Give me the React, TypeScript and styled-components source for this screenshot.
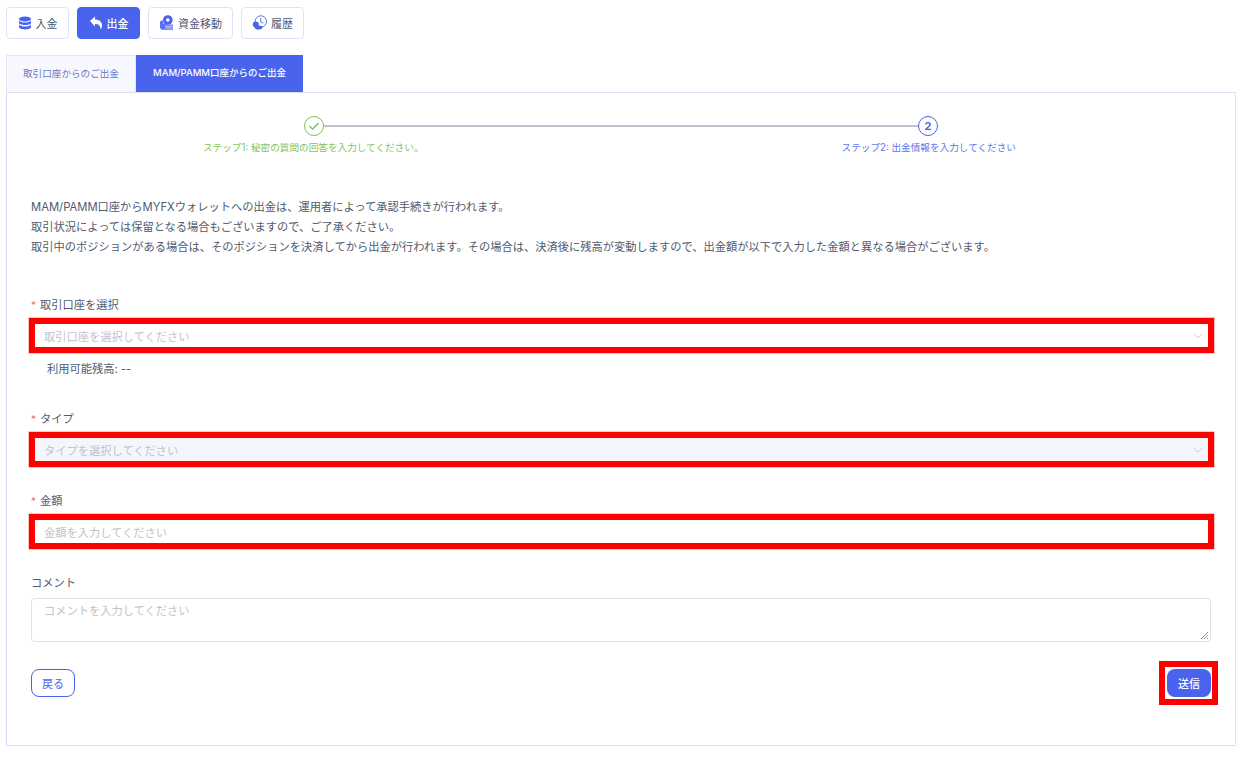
import React from "react";
import styled, { createGlobalStyle } from "styled-components";

const Global = createGlobalStyle`
    * { box-sizing: border-box; }
    body {
        margin: 0;
        background: #fff;
        font-family: Inter, "Noto Sans CJK JP", sans-serif;
        color: #515a6e;
    }
`;

const Page = styled.div`
    width: 1248px;
    height: 760px;
    padding: 7px 12px 0 6px;
    overflow: hidden;
`;

const Toolbar = styled.div`
    display: flex;
    gap: 8px;
`;

const NavButton = styled.button<{ $active?: boolean; $width: number }>`
    display: flex;
    align-items: center;
    justify-content: center;
    gap: 4px;
    width: ${(p) => p.$width}px;
    height: 32px;
    padding: 0 0 1px;
    border-radius: 4px;
    border: 1px solid ${(p) => (p.$active ? "#4a63ec" : "#e0e2f8")};
    background: ${(p) => (p.$active ? "#4a63ec" : "#fff")};
    color: ${(p) => (p.$active ? "#fff" : "#515a6e")};
    font: inherit;
    font-size: 11px;
    font-weight: ${(p) => (p.$active ? 500 : 400)};
`;

const Tabs = styled.div`
    display: flex;
    margin-top: 16px;
    height: 37px;
`;

const Tab = styled.div<{ $active?: boolean; $width: number }>`
    display: flex;
    align-items: center;
    justify-content: center;
    width: ${(p) => p.$width}px;
    padding-bottom: 3px;
    font-size: ${(p) => (p.$active ? 9.5 : 9.6)}px;
    color: ${(p) => (p.$active ? "#fff" : "#6a78c8")};
    font-weight: ${(p) => (p.$active ? 500 : 400)};
    background: ${(p) => (p.$active ? "#4a63ec" : "#f7f8fe")};
    border: ${(p) => (p.$active ? "none" : "1px solid #e6e8fa")};
    border-bottom: none;
`;

const Panel = styled.div`
    width: 1230px;
    height: 654px;
    border: 1px solid #dfe0f5;
    border-left-color: #d4d8fb;
    padding: 23px 24px 0;
`;

const Stepper = styled.div`
    height: 42px;
    width: 1180px;
`;

const StepTrack = styled.div`
    display: flex;
    align-items: center;
    margin-left: 273px;
    width: 634px;
    height: 20px;
`;

const Circle = styled.div<{ $done?: boolean }>`
    flex: none;
    display: flex;
    align-items: center;
    justify-content: center;
    width: 20px;
    height: 20px;
    border-radius: 50%;
    border: 1px solid ${(p) => (p.$done ? "#79c152" : "#4a63ec")};
    color: ${(p) => (p.$done ? "#79c152" : "#4a63ec")};
    font-size: 11px;
    font-weight: 700;
`;

const Line = styled.div`
    flex: 1;
    height: 2px;
    background: #c0c2d2;
`;

const StepLabels = styled.div`
    display: flex;
    justify-content: space-between;
    margin-top: 5px;
    padding: 0 195px 0 172px;
    font-size: 9.65px;
    line-height: 14px;
`;

const StepLabel = styled.span<{ $done?: boolean }>`
    color: ${(p) => (p.$done ? "#82c45e" : "#5d74ee")};
`;

const Notice = styled.div`
    margin-top: 39px;
    font-size: 11.25px;
    line-height: 20px;
    color: #515a6e;
`;

const Form = styled.div`
    margin-top: 40px;
    width: 1180px;
`;

const Label = styled.div`
    font-size: 11.25px;
    line-height: 16px;
    color: #515a6e;
    margin-bottom: 5px;
`;

const Required = styled.span`
    color: #f56c6c;
    margin-right: 4px;
    font-size: 10px;
`;

const Highlight = styled.div`
    width: 1185px;
    height: 35px;
    margin-left: -2px;
    border: 6px solid #ff0000;
    box-shadow: 0 0 0 0.5px #ff8080;
`;

const FieldBox = styled.div<{ $tinted?: boolean }>`
    display: flex;
    align-items: center;
    justify-content: space-between;
    height: 100%;
    padding: 1px 5px 0 9px;
    background: ${(p) => (p.$tinted ? "#f4f6fb" : "#fff")};
    font-size: 11.25px;
    color: #bfc3cc;
`;

const Balance = styled.div`
    margin: 8px 0 0 16px;
    font-size: 11.25px;
    line-height: 16px;
    color: #515a6e;
`;

const Section = styled.div<{ $top: number }>`
    margin-top: ${(p) => p.$top}px;
`;

const Comment = styled.div`
    position: relative;
    height: 44px;
    margin-top: 7px;
    padding: 5px 12px;
    border: 1px solid #dfe1e8;
    border-radius: 4px;
    font-size: 11.25px;
    line-height: 14px;
    color: #bfc3cc;
`;

const Grip = styled.svg`
    position: absolute;
    right: 1px;
    bottom: 1px;
`;

const Actions = styled.div`
    display: flex;
    justify-content: space-between;
    align-items: center;
    margin-top: 19px;
`;

const BackButton = styled.button`
    width: 44px;
    height: 28px;
    padding: 0;
    background: #fff;
    border: 1px solid #4a63ec;
    border-radius: 8px;
    color: #4a63ec;
    font: inherit;
    font-size: 11px;
`;

const SubmitFrame = styled.div`
    margin-right: -7px;
    padding: 2px 1px 2px 2px;
    border: 6px solid #ff0000;
`;

const SubmitButton = styled.button`
    display: block;
    width: 44px;
    height: 28px;
    padding: 0;
    background: #4a63ec;
    border: none;
    border-radius: 8px;
    color: #fff;
    font: inherit;
    font-size: 11px;
    font-weight: 500;
`;

const Chevron = () => (
    <svg width="10" height="6" viewBox="0 0 10 6" fill="none">
        <path d="M1 1l4 4 4-4" stroke="#c8ccd4" strokeWidth="1" />
    </svg>
);

const StackIcon = () => (
    <svg width="14" height="14" viewBox="0 0 14 14" fill="#4a63ec">
        <ellipse cx="7" cy="3" rx="6" ry="2.4" />
        <path d="M1 4.6c1 1.4 3.4 2 6 2s5-.6 6-2v2.2c0 1.3-2.7 2.3-6 2.3s-6-1-6-2.3z" />
        <path d="M1 8.6c1 1.4 3.4 2 6 2s5-.6 6-2v2.4c0 1.3-2.7 2.4-6 2.4s-6-1.100-6-2.400z" />
    </svg>
);

const ReplyIcon = () => (
    <svg width="14" height="14" viewBox="0 0 14 14" fill="#fff">
        <path d="M1 5l5-4.500v3c4 0 7 2 7 6 0 1.500-.5 3-1.500 4 .3-3.500-1.500-5.500-5.500-5.500v2.500z" />
    </svg>
);

const MoneyIcon = () => (
    <svg width="15" height="15" viewBox="0 0 15 15">
        <circle cx="8.800" cy="5" r="4.800" fill="#4a63ec" />
        <circle cx="8.800" cy="5" r="1.800" fill="#fff" />
        <path d="M1 6.500l3-1.500.5 3.800 5.500.7h4v5.200H3l-2-1.500z" fill="#5a70ee" />
        <path d="M6 11.200h8M6 13h8" stroke="#fff" strokeWidth=".7" />
    </svg>
);

const HistoryIcon = () => (
    <svg width="15" height="15" viewBox="0 0 15 15" fill="none">
        <circle cx="8.800" cy="6.500" r="5.700" stroke="#5a70ee" strokeWidth="1" fill="#fff" />
        <path d="M8.800 3.200v3.600l2.400 1.400" stroke="#4a63ec" strokeWidth="1" />
        <circle cx="3.800" cy="9.500" r="3" fill="#4a63ec" />
        <ellipse cx="6.500" cy="12.500" rx="3.800" ry="2" fill="#4a63ec" />
    </svg>
);

export default function App() {
    return (
        <Page>
            <Global />
            <Toolbar>
                <NavButton $width={63}>
                    <StackIcon />
                    入金
                </NavButton>
                <NavButton $width={63} $active>
                    <ReplyIcon />
                    出金
                </NavButton>
                <NavButton $width={85}>
                    <MoneyIcon />
                    資金移動
                </NavButton>
                <NavButton $width={63}>
                    <HistoryIcon />
                    履歴
                </NavButton>
            </Toolbar>
            <Tabs>
                <Tab $width={130}>取引口座からのご出金</Tab>
                <Tab $width={167} $active>
                    MAM/PAMM口座からのご出金
                </Tab>
            </Tabs>
            <Panel>
                <Stepper>
                    <StepTrack>
                        <Circle $done>
                            <svg width="12" height="10" viewBox="0 0 12 10" fill="none">
                                <path d="M1.500 5l3 3 6-6" stroke="#79c152" strokeWidth="1.300" />
                            </svg>
                        </Circle>
                        <Line />
                        <Circle>2</Circle>
                    </StepTrack>
                    <StepLabels>
                        <StepLabel $done>ステップ1: 秘密の質問の回答を入力してください。</StepLabel>
                        <StepLabel>ステップ2: 出金情報を入力してください</StepLabel>
                    </StepLabels>
                </Stepper>
                <Notice>
                    MAM/PAMM口座からMYFXウォレットへの出金は、運用者によって承認手続きが行われます。
                    <br />
                    取引状況によっては保留となる場合もございますので、ご了承ください。
                    <br />
                    取引中のポジションがある場合は、そのポジションを決済してから出金が行われます。その場合は、決済後に残高が変動しますので、出金額が以下で入力した金額と異なる場合がございます。
                </Notice>
                <Form>
                    <Label>
                        <Required>*</Required>取引口座を選択
                    </Label>
                    <Highlight>
                        <FieldBox>
                            取引口座を選択してください
                            <Chevron />
                        </FieldBox>
                    </Highlight>
                    <Balance>利用可能残高: --</Balance>
                    <Section $top={34}>
                        <Label>
                            <Required>*</Required>タイプ
                        </Label>
                        <Highlight>
                            <FieldBox $tinted>
                                タイプを選択してください
                                <Chevron />
                            </FieldBox>
                        </Highlight>
                    </Section>
                    <Section $top={26}>
                        <Label>
                            <Required>*</Required>金額
                        </Label>
                        <Highlight>
                            <FieldBox>金額を入力してください</FieldBox>
                        </Highlight>
                    </Section>
                    <Section $top={26}>
                        <Label>コメント</Label>
                        <Comment>
                            コメントを入力してください
                            <Grip width="9" height="9" viewBox="0 0 9 9" fill="none">
                                <path d="M1 8l7-7M4 8l4-4M7 8l1-1" stroke="#777" strokeWidth=".8" />
                            </Grip>
                        </Comment>
                    </Section>
                    <Actions>
                        <BackButton>戻る</BackButton>
                        <SubmitFrame>
                            <SubmitButton>送信</SubmitButton>
                        </SubmitFrame>
                    </Actions>
                </Form>
            </Panel>
        </Page>
    );
}
